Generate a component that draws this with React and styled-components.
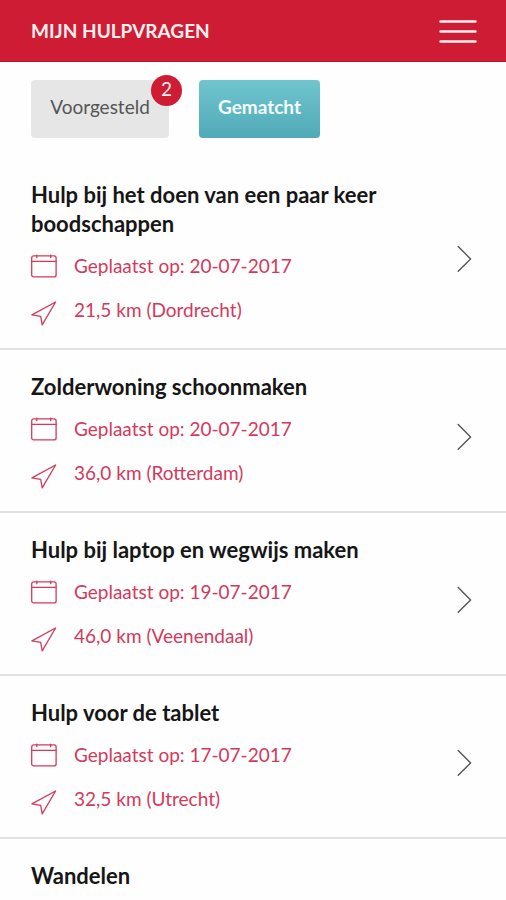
import React from "react";
import styled, { createGlobalStyle } from "styled-components";

const GlobalStyle = createGlobalStyle`
  * {
    box-sizing: border-box;
  }

  body {
    margin: 0;
    background: #fefefe;
    color: #161616;
    font-family: Lato, "Open Sans", sans-serif;
  }
`;

const Page = styled.div`
  display: flex;
  flex-direction: column;
  height: 100vh;
`;

const Header = styled.header`
  display: flex;
  flex-shrink: 0;
  align-items: center;
  justify-content: space-between;
  height: 62px;
  padding: 0 29px 0 31px;
  background: #ce1c34;
  border-bottom: 1px solid #c4122a;
`;

const PageTitle = styled.h1`
  margin: 0;
  color: #fff0f0;
  font-size: 19px;
  font-weight: 700;
  line-height: 28px;
  text-transform: uppercase;
`;

const MenuButton = styled.button`
  display: flex;
  padding: 0;
  background: none;
  border: 0;
  cursor: pointer;
`;

const Tabs = styled.nav`
  display: flex;
  flex-shrink: 0;
  gap: 30px;
  padding: 18px 31px 20px;
`;

const Tab = styled.button`
  position: relative;
  height: 58px;
  min-width: ${(props) => (props.$active ? "121px" : "138px")};
  padding: 0 18px 6px;
  background: ${(props) =>
    props.$active ? "linear-gradient(#70c5ce, #50aab7)" : "#e6e6e6"};
  border: 0;
  border-radius: 4px;
  color: ${(props) => (props.$active ? "#f4fdff" : "#555")};
  font-family: inherit;
  font-size: 19px;
  font-weight: ${(props) => (props.$active ? 700 : 400)};
  cursor: pointer;
`;

const Badge = styled.span`
  position: absolute;
  top: -5px;
  right: -13px;
  width: 31px;
  height: 31px;
  background: #ce1c34;
  border-radius: 50%;
  color: #fff0f0;
  font-size: 19px;
  font-weight: 400;
  line-height: 28px;
  text-align: center;
`;

const List = styled.ul`
  flex: 1;
  min-height: 0;
  margin: 0;
  padding: 0;
  list-style: none;
  overflow-y: auto;
  scrollbar-width: none;
`;

const Item = styled.li`
  border-bottom: 2px solid #e2e2e2;
`;

const ItemLink = styled.a`
  display: flex;
  align-items: center;
  justify-content: space-between;
  gap: 40px;
  padding: 22px 34px 16px 31px;
  color: inherit;
  text-decoration: none;
`;

const ItemTitle = styled.h2`
  margin: 0 0 6px;
  font-size: 22px;
  font-weight: 700;
  line-height: 29px;
`;

const Meta = styled.p`
  display: flex;
  align-items: center;
  gap: 17px;
  height: 44px;
  margin: 0;
  color: #d23a5c;
  font-size: 19px;
  line-height: 28px;
`;

const Icon = styled.svg`
  flex-shrink: 0;
  fill: none;
  stroke: ${(props) => props.$color};
  stroke-width: ${(props) => props.$stroke};
  stroke-linecap: round;
  stroke-linejoin: round;
`;

function MenuIcon() {
  return (
    <Icon width="38" height="24" $color="#fff0f0" $stroke={2.4} aria-hidden="true">
      <path d="M1.5 2.5H36.5M1.5 12.5H36.5M1.5 22.5H36.5" />
    </Icon>
  );
}

function CalendarIcon() {
  return (
    <Icon width="26" height="24" $color="#d5395b" $stroke={1.3} aria-hidden="true">
      <rect x="0.7" y="1.9" width="24.4" height="21" rx="2" />
      <path d="M0.7 7.4H25M5.8 1.2V3.7M19.7 1.2V3.7" />
    </Icon>
  );
}

function LocationIcon() {
  return (
    <Icon width="26" height="32" $color="#d5395b" $stroke={1.3} aria-hidden="true">
      <path d="M24.6 8L0.9 20.9L9.7 22.4L11.2 30.8Z" />
    </Icon>
  );
}

function ChevronIcon() {
  return (
    <Icon width="15" height="32" $color="#555" $stroke={1.4} aria-hidden="true">
      <path d="M1.2 6.5L13.6 19L1.2 31.3" />
    </Icon>
  );
}

const requests = [
  {
    title: "Hulp bij het doen van een paar keer boodschappen",
    date: "20-07-2017",
    distance: "21,5 km (Dordrecht)",
  },
  {
    title: "Zolderwoning schoonmaken",
    date: "20-07-2017",
    distance: "36,0 km (Rotterdam)",
  },
  {
    title: "Hulp bij laptop en wegwijs maken",
    date: "19-07-2017",
    distance: "46,0 km (Veenendaal)",
  },
  {
    title: "Hulp voor de tablet",
    date: "17-07-2017",
    distance: "32,5 km (Utrecht)",
  },
  { title: "Wandelen" },
];

function Request({ title, date, distance }) {
  return (
    <Item>
      <ItemLink href="#">
        <div>
          <ItemTitle>{title}</ItemTitle>
          {date && (
            <Meta>
              <CalendarIcon />
              Geplaatst op: {date}
            </Meta>
          )}
          {distance && (
            <Meta>
              <LocationIcon />
              {distance}
            </Meta>
          )}
        </div>
        {date && <ChevronIcon />}
      </ItemLink>
    </Item>
  );
}

function App() {
  return (
    <Page>
      <GlobalStyle />
      <Header>
        <PageTitle>Mijn hulpvragen</PageTitle>
        <MenuButton aria-label="Menu">
          <MenuIcon />
        </MenuButton>
      </Header>
      <Tabs>
        <Tab>
          Voorgesteld
          <Badge>2</Badge>
        </Tab>
        <Tab $active>Gematcht</Tab>
      </Tabs>
      <List>
        {requests.map((request) => (
          <Request key={request.title} {...request} />
        ))}
      </List>
    </Page>
  );
}

export default App;
